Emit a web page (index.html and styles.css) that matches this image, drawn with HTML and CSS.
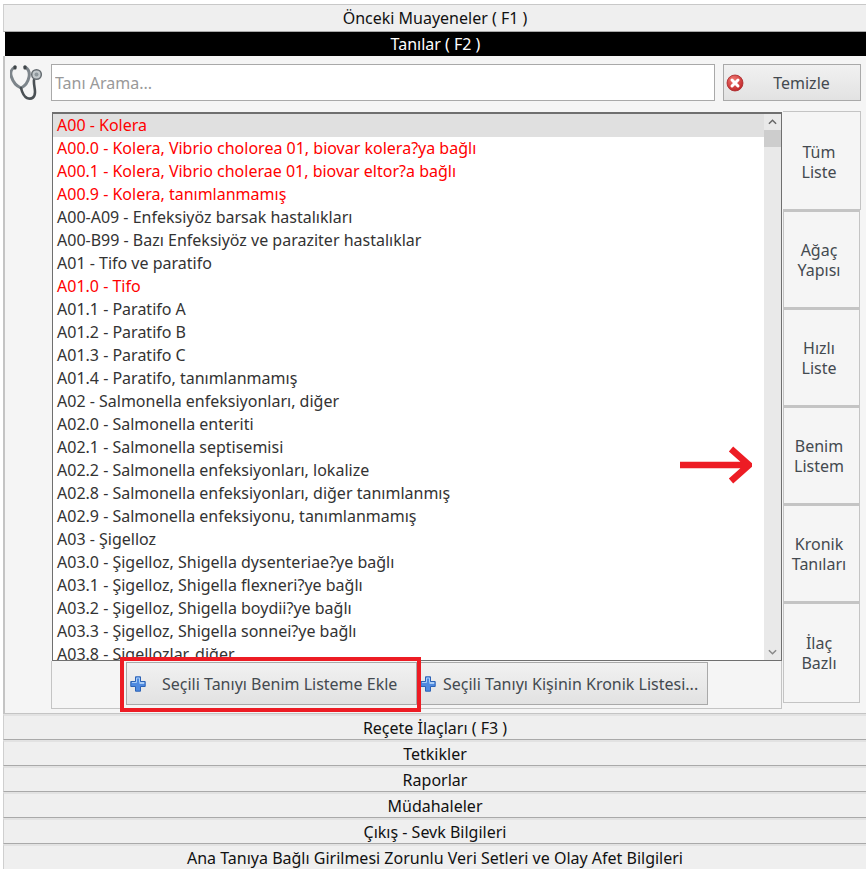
FILE: index.html
```html
<!DOCTYPE html>
<html lang="tr">
<head>
<meta charset="utf-8">
<title>Tanılar</title>
<link rel="stylesheet" href="styles.css">
</head>
<body>
<div class="accordion">
  <div class="header first">Önceki Muayeneler ( F1 )</div>
  <div class="header active">Tanılar ( F2 )</div>
  <section class="panel">
    <div class="search-row">
      <svg class="steth" viewBox="0 0 32 35" aria-hidden="true">
        <path d="M5 2C1 4 0 8 1.500 12c1.500 5 5 9 9.500 11 4-2 7-6 8-11 .8-4-.5-8-4-10" fill="none" stroke="#7d858b" stroke-width="3" stroke-linecap="round"/>
        <path d="M11 23c1 4 2 8 6 10 5 2 8-1 8-6 0-4-1.500-8-1-12" fill="none" stroke="#4a5054" stroke-width="2.600" stroke-linecap="round"/>
        <circle cx="26.500" cy="9.500" r="4.800" fill="#c3c9cc" stroke="#666d72" stroke-width="1.500"/>
        <circle cx="26.500" cy="9.500" r="2" fill="#8e979c"/>
        <rect x="3.500" y="0.500" width="3" height="4" rx="1" fill="#3f4548"/>
        <rect x="13.500" y="0.500" width="3" height="4" rx="1" fill="#3f4548"/>
      </svg>
      <input class="search" type="text" placeholder="Tanı Arama...">
      <button class="btn clear" type="button">
        <svg class="btn-icon" viewBox="0 0 18 18" aria-hidden="true">
          <defs><radialGradient id="red" cx="40%" cy="30%" r="75%"><stop offset="0" stop-color="#f27a74"/><stop offset="1" stop-color="#bd2124"/></radialGradient></defs>
          <circle cx="9" cy="9" r="8" fill="url(#red)" stroke="#a8272a" stroke-width=".8"/>
          <path d="M6 6l6 6M12 6l-6 6" stroke="#fff" stroke-width="3" stroke-linecap="round"/>
        </svg>
        <span class="clear-label">Temizle</span>
      </button>
    </div>
    <div class="content">
      <div class="list-col">
        <div class="list-box">
          <ul class="list">
            <li class="sel red">A00 - Kolera</li>
            <li class="red">A00.0 - Kolera, Vibrio cholorea 01, biovar kolera?ya bağlı</li>
            <li class="red">A00.1 - Kolera, Vibrio cholerae 01, biovar eltor?a bağlı</li>
            <li class="red">A00.9 - Kolera, tanımlanmamış</li>
            <li>A00-A09 - Enfeksiyöz barsak hastalıkları</li>
            <li>A00-B99 - Bazı Enfeksiyöz ve paraziter hastalıklar</li>
            <li>A01 - Tifo ve paratifo</li>
            <li class="red">A01.0 - Tifo</li>
            <li>A01.1 - Paratifo A</li>
            <li>A01.2 - Paratifo B</li>
            <li>A01.3 - Paratifo C</li>
            <li>A01.4 - Paratifo, tanımlanmamış</li>
            <li>A02 - Salmonella enfeksiyonları, diğer</li>
            <li>A02.0 - Salmonella enteriti</li>
            <li>A02.1 - Salmonella septisemisi</li>
            <li>A02.2 - Salmonella enfeksiyonları, lokalize</li>
            <li>A02.8 - Salmonella enfeksiyonları, diğer tanımlanmış</li>
            <li>A02.9 - Salmonella enfeksiyonu, tanımlanmamış</li>
            <li>A03 - Şigelloz</li>
            <li>A03.0 - Şigelloz, Shigella dysenteriae?ye bağlı</li>
            <li>A03.1 - Şigelloz, Shigella flexneri?ye bağlı</li>
            <li>A03.2 - Şigelloz, Shigella boydii?ye bağlı</li>
            <li>A03.3 - Şigelloz, Shigella sonnei?ye bağlı</li>
            <li>A03.8 - Şigellozlar, diğer</li>
          </ul>
          <div class="scrollbar">
            <svg class="arrow" viewBox="0 0 10 6" aria-hidden="true"><path d="M1 5l4-4 4 4" fill="none" stroke="#666" stroke-width="1.600"/></svg>
            <div class="thumb"></div>
            <svg class="arrow down" viewBox="0 0 10 6" aria-hidden="true"><path d="M1 1l4 4 4-4" fill="none" stroke="#888" stroke-width="1.600"/></svg>
          </div>
        </div>
        <div class="actions">
          <button class="btn add first-add" type="button">
            <svg class="btn-icon" viewBox="0 0 16 16" aria-hidden="true"><path d="M5.500 .8h5v4.700h4.700v5h-4.700v4.700h-5v-4.700H.8v-5h4.700z" fill="#4f8ae0" stroke="#2c62b5" stroke-width="1"/><path d="M6.500 2h3v4.500H14v1H9.500M2 6.500h4.500V2" fill="none" stroke="#a9cdf7" stroke-width="1"/></svg>
            <span class="add-label">Seçili Tanıyı Benim Listeme Ekle</span>
          </button>
          <button class="btn add second-add" type="button">
            <svg class="btn-icon" viewBox="0 0 16 16" aria-hidden="true"><path d="M5.500 .8h5v4.700h4.700v5h-4.700v4.700h-5v-4.700H.8v-5h4.700z" fill="#4f8ae0" stroke="#2c62b5" stroke-width="1"/><path d="M6.500 2h3v4.500H14v1H9.500M2 6.500h4.500V2" fill="none" stroke="#a9cdf7" stroke-width="1"/></svg>
            <span class="add-label">Seçili Tanıyı Kişinin Kronik Listesi...</span>
          </button>
          <div class="highlight"></div>
        </div>
      </div>
      <nav class="tabs">
        <div class="tab active-tab h99">Tüm<br>Liste</div>
        <div class="tab h98">Ağaç<br>Yapısı</div>
        <div class="tab h98">Hızlı<br>Liste</div>
        <div class="tab h98">Benim<br>Listem</div>
        <div class="tab h98">Kronik<br>Tanıları</div>
        <div class="tab h101">İlaç<br>Bazlı</div>
      </nav>
      <svg class="red-arrow" viewBox="0 0 72 38" aria-hidden="true"><path d="M0 19H67M51 3l18 16-18 16" fill="none" stroke="#ed1c24" stroke-width="6.500"/></svg>
    </div>
  </section>
  <div class="header">Reçete İlaçları ( F3 )</div>
  <div class="header">Tetkikler</div>
  <div class="header">Raporlar</div>
  <div class="header">Müdahaleler</div>
  <div class="header">Çıkış - Sevk Bilgileri</div>
  <div class="header">Ana Tanıya Bağlı Girilmesi Zorunlu Veri Setleri ve Olay Afet Bilgileri</div>
</div>
</body>
</html>
```

FILE: styles.css
```css
* { box-sizing: border-box; }
html, body { margin: 0; height: 869px; overflow: hidden; background: #fff; }
body { font-family: "Noto Sans", sans-serif; font-size: 16px; color: #1a1a1a; padding: 4px 0 0 3px; }
.accordion { display: flex; flex-direction: column; }
.header {
  height: 26px;
  background: #efefef;
  border-top: 2px solid #e2e2e2;
  border-bottom: 1px solid #a9a9a9;
  border-left: 1px solid #cfcfcf;
  text-align: center;
  line-height: 25px;
  color: #111;
  white-space: nowrap;
}
.header.first { height: 28px; border-top: 1px solid #c8c8c8; line-height: 26px; }
.header.active {
  height: 24px; margin-left: 2px;
  background: #000; color: #fff; border: 0; line-height: 24px;
}
.panel {
  height: 658px;
  background: #f5f5f5;
  border: 1px solid #c4c4c4;
  border-width: 0 0 1px 2px;
  padding: 8px 5px 0 6px;
  display: flex;
  flex-direction: column;
}
.search-row { display: flex; align-items: center; height: 37px; }
.steth { width: 32px; height: 35px; margin: 0 9px 0 -1px; flex: none; }
.search {
  width: 664px; height: 37px; flex: none;
  border: 1px solid #a9a9a9; background: #fff;
  font: inherit; padding: 0 3px; outline: 0;
  color: #999;
}
.search::placeholder { color: #999; opacity: 1; }
.btn {
  font: inherit; color: #444a50;
  background: linear-gradient(#f1f1f1, #e2e2e2);
  border: 1px solid #a9a9a9;
  display: flex; align-items: center;
  padding: 0; cursor: default;
}
.clear { width: 138px; height: 37px; margin-left: 8px; padding-left: 2px; }
.btn-icon { width: 18px; height: 18px; flex: none; }
.clear-label { flex: 1; text-align: center; padding-right: 1px; }
.content { position: relative; display: flex; margin-top: 11px; }
.list-col { width: 731px; margin-left: 40px; flex: none; }
.list-box {
  height: 549px; display: flex; margin-left: 1px;
  border: 1px solid #6f6f6f; border-width: 2px 1px 1px 1px;
  background: #fff;
  overflow: hidden;
}
.list { flex: 1; margin: 0; padding: 0; list-style: none; overflow: hidden; }
.list li { height: 23px; line-height: 23px; padding-left: 4px; white-space: nowrap; color: #333; }
.list li.red { color: #f00; }
.list li.sel { background: #e0e0e0; }
.scrollbar {
  width: 17px; flex: none; background: #e9e9e9;
  display: flex; flex-direction: column; align-items: center;
}
.arrow { width: 9px; height: 6px; margin-top: 5px; flex: none; }
.arrow.down { margin-top: auto; margin-bottom: 5px; }
.thumb { width: 17px; height: 17px; margin-top: 5px; background: #cdcdcd; flex: none; }
.actions {
  position: relative;
  height: 48px; display: flex; align-items: flex-start;
  background: #f5f5f5;
  border: 1px solid #c4c4c4; border-top: 0;
  padding: 1px 0 0 74px;
}
.add { height: 43px; }
.add .btn-icon { width: 16px; height: 16px; }
.first-add { width: 291px; padding-left: 3px; }
.first-add .add-label { margin-left: 16px; }
.second-add { width: 288px; margin-left: 3px; border-left: 0; }
.second-add .add-label { margin-left: 7px; }
.highlight {
  position: absolute; left: 68px; top: -4px;
  width: 301px; height: 55px;
  border: 4px solid #ed1c24;
  pointer-events: none;
}
.tabs { width: 79px; flex: none; display: flex; flex-direction: column; margin-left: 1px; margin-top: -1px; }
.tab {
  display: flex; align-items: center; justify-content: center;
  text-align: center; line-height: 20px;
  color: #444a50;
  border: 1px solid #c4c4c4;
  border-top-width: 2px;
  background: #f5f5f5;
  padding-right: 5px;
  width: 77px;
}
.tab.active-tab { border-top-width: 1px; border-left: 0; width: 78px; padding-top: 2px; }
.h99 { height: 99px; }
.h98 { height: 98px; }
.h101 { height: 101px; }
.red-arrow { position: absolute; left: 669px; top: 334px; width: 72px; height: 38px; }
```
